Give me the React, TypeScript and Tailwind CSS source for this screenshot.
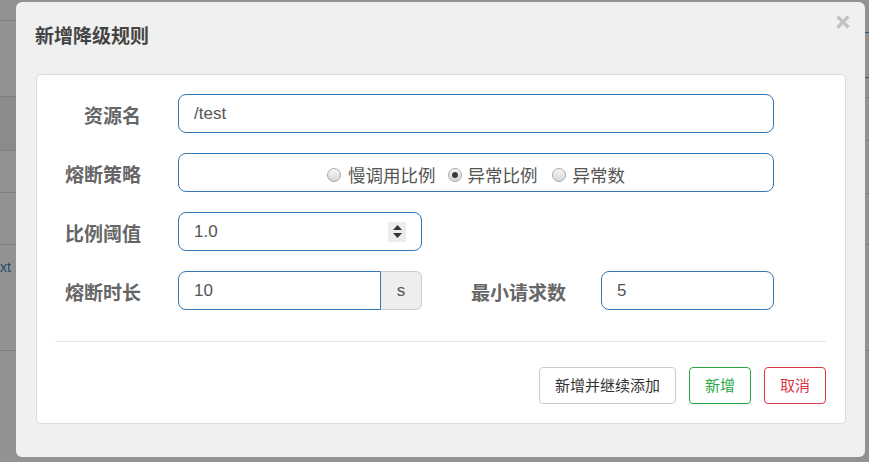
import React from "react";

const cjk = "font-['Noto_Sans_CJK_SC','Noto_Sans',sans-serif]";
const latin = "font-['Liberation_Sans','Noto_Sans_CJK_SC',Arial,sans-serif]";

function Radio({ checked }: { checked?: boolean }) {
  return (
    <span className="flex h-[14px] w-[14px] shrink-0 items-center justify-center rounded-full border border-[#a9a9a9] bg-gradient-to-b from-[#f7f7f7] to-[#d6d6d6]">
      {checked ? <span className="h-[6px] w-[6px] rounded-full bg-[#3a3a3a]" /> : null}
    </span>
  );
}

function Label({ children, className = "" }: { children: React.ReactNode; className?: string }) {
  return (
    <div className={`w-[104px] shrink-0 pt-[2px] text-right text-[19px] font-bold leading-[37px] text-[#666] ${cjk} ${className}`}>
      {children}
    </div>
  );
}

function Background() {
  return (
    <div className="flex h-full w-full">
      <div className="flex w-1/2 flex-col">
        <div className="h-[21px] border-b border-[#7e7e7e]" />
        <div className="h-[76px] border-b border-[#7e7e7e]" />
        <div className="h-[54px] border-b border-[#7e7e7e] bg-[#8a8b8c]" />
        <div className="h-[42px] border-b border-[#7e7e7e]" />
        <div className="h-[52px] border-b border-[#7e7e7e]" />
        <div className="flex h-[106px] items-start border-b border-[#7e7e7e] pt-[12px]">
          <span className={`text-[14px] text-[#1f4a70] ${latin}`}>xt</span>
        </div>
        <div className="flex-1" />
      </div>
      <div className="flex w-1/2 flex-col">
        <div className="h-[33px] border-b border-[#2d5f8a]" />
        <div className="h-[45px] border-b border-[#2d5f8a]" />
        <div className="h-[20px] border-b border-[#7e7e7e]" />
        <div className="h-[43px] border-b border-[#7e7e7e]" />
        <div className="h-[53px] border-b border-[#7e7e7e]" />
        <div className="h-[51px] border-b border-[#7e7e7e]" />
        <div className="h-[106px] border-b border-[#7e7e7e]" />
        <div className="flex-1" />
      </div>
    </div>
  );
}

export default function App() {
  return (
    <div className="relative h-[462px] w-[869px] overflow-hidden bg-[#929292]">
      <Background />
      <div className="absolute left-[16px] top-[2px] flex h-[455px] w-[849px] flex-col rounded-[6px] bg-[#f0f0f0]">
        <div className="flex h-[66px] shrink-0 justify-between">
          <div className={`ml-[19px] self-center text-[19px] font-bold text-[#444] ${cjk}`}>新增降级规则</div>
          <svg className="mr-[15px] mt-[13px]" width="14" height="14" viewBox="0 0 14 14">
            <path d="M1.5 1.5 L12.5 12.5 M12.5 1.5 L1.5 12.5" stroke="#c2c2c2" strokeWidth="3.2" />
          </svg>
        </div>
        <div className="ml-[20px] mt-[6px] flex w-[810px] flex-col rounded-[5px] border border-[#dcdcdc] bg-white pb-[19px] pt-[19px]">
          <div className="flex flex-col gap-[20px]">
            <div className="flex h-[39px] items-center">
              <Label className="w-[103px]">资源名</Label>
              <div className={`ml-[37px] flex h-[39px] w-[596px] items-center rounded-[8px] border border-[#3479b7] pl-[15px] text-[17px] text-[#555] ${latin}`}>
                /test
              </div>
            </div>
            <div className="flex h-[39px] items-center">
              <Label className="w-[103px]">熔断策略</Label>
              <div className={`ml-[37px] flex h-[39px] w-[596px] items-center justify-center rounded-[8px] border border-[#3479b7] pt-[5px] text-[17.5px] text-[#555] ${cjk}`}>
                <div className="flex items-center gap-[7px]">
                  <Radio />
                  <span>慢调用比例</span>
                </div>
                <div className="ml-[12px] flex items-center gap-[6px]">
                  <Radio checked />
                  <span>异常比例</span>
                </div>
                <div className="ml-[14px] flex items-center gap-[7px]">
                  <Radio />
                  <span>异常数</span>
                </div>
              </div>
            </div>
            <div className="flex h-[39px] items-center">
              <Label className="w-[103px]">比例阈值</Label>
              <div className={`ml-[37px] flex h-[39px] w-[244px] items-center justify-between rounded-[8px] border border-[#3479b7] pl-[15px] pr-[15px] text-[17px] text-[#555] ${latin}`}>
                <span>1.0</span>
                <div className="flex h-[20px] w-[18px] flex-col items-center justify-center gap-[3px] bg-[#ececec]">
                  <svg width="9" height="5" viewBox="0 0 9 5">
                    <path d="M4.5 0 L9 5 L0 5 Z" fill="#333" />
                  </svg>
                  <svg width="9" height="5" viewBox="0 0 9 5">
                    <path d="M0 0 L9 0 L4.5 5 Z" fill="#333" />
                  </svg>
                </div>
              </div>
            </div>
            <div className="flex h-[39px] items-center">
              <Label className="w-[103px]">熔断时长</Label>
              <div className="ml-[37px] flex h-[39px] w-[244px]">
                <div className={`flex h-[39px] w-[203px] items-center rounded-l-[8px] border border-[#3479b7] pl-[15px] text-[17px] text-[#555] ${latin}`}>
                  10
                </div>
                <div className={`flex h-[39px] flex-1 items-center justify-center rounded-r-[6px] border border-l-0 border-[#cccccc] bg-[#eeeeee] text-[17px] text-[#555] ${latin}`}>
                  s
                </div>
              </div>
              <Label className="ml-[40px]">最小请求数</Label>
              <div className={`ml-[35px] flex h-[39px] w-[173px] items-center rounded-[8px] border border-[#3479b7] pl-[15px] text-[17px] text-[#555] ${latin}`}>
                5
              </div>
            </div>
          </div>
          <div className="ml-[18px] mr-[19px] mt-[31px] h-px bg-[#e5e5e5]" />
          <div className={`mr-[19px] mt-[25px] flex justify-end gap-[13px] text-[15px] ${cjk}`}>
            <div className="flex h-[37px] w-[137px] items-center justify-center rounded-[4px] border border-[#cccccc] text-[#333]">
              新增并继续添加
            </div>
            <div className="flex h-[37px] w-[62px] items-center justify-center rounded-[4px] border border-[#28a745] text-[#28a745]">
              新增
            </div>
            <div className="flex h-[37px] w-[62px] items-center justify-center rounded-[4px] border border-[#dc3545] text-[#dc3545]">
              取消
            </div>
          </div>
        </div>
      </div>
    </div>
  );
}
